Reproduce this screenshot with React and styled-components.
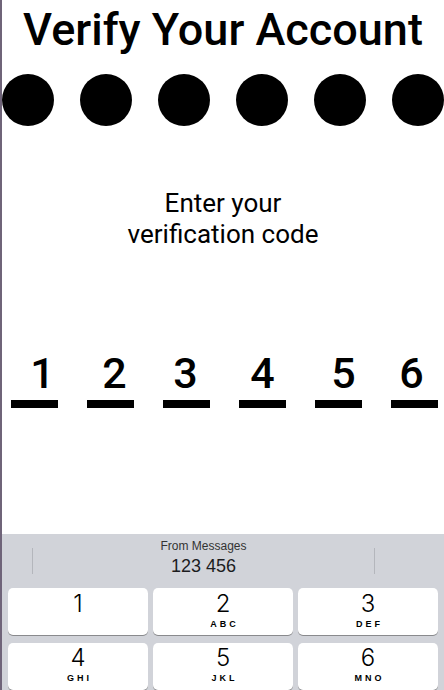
import React from "react";
import styled, { createGlobalStyle } from "styled-components";

const Global = createGlobalStyle`
  html, body { margin: 0; padding: 0; background: #ffffff; }
  body { font-family: Roboto, "Liberation Sans", sans-serif; }
  * { box-sizing: border-box; }
`;

const Screen = styled.div`
  width: 444px;
  height: 690px;
  border-left: 2px solid #6f6479;
  background: #ffffff;
  display: flex;
  flex-direction: column;
  overflow: hidden;
`;

const Title = styled.h1`
  margin: 2px 0 0;
  font-family: Roboto, "Liberation Sans", sans-serif;
  font-weight: 500;
  font-size: 45px;
  line-height: 56px;
  text-align: center;
  color: #000;
  white-space: nowrap;
`;

const DotRow = styled.div`
  margin-top: 16px;
  display: flex;
  justify-content: space-between;
  gap: 26px;
`;

const Dot = styled.span`
  width: 52px;
  height: 52px;
  border-radius: 50%;
  background: #000;
  flex: none;
`;

const Prompt = styled.p`
  margin: 62px 0 0;
  font-family: Roboto, "Liberation Sans", sans-serif;
  font-size: 26px;
  line-height: 31px;
  text-align: center;
  color: #000;
`;

const CodeRow = styled.div`
  margin-top: 99px;
  padding-left: 9px;
  display: flex;
  gap: 29px;
`;

const CodeCell = styled.div`
  width: 47px;
  font-family: Roboto, "Liberation Sans", sans-serif;
  font-weight: 500;
  font-size: 43px;
  line-height: 48px;
  text-align: center;
  color: #000;
  padding-bottom: 3px;
  border-bottom: 8px solid #000;
`;

const CodeDigit = styled.span`
  display: inline-block;
  transform: translateX(${(p) => p.$shift || 0}px);
`;

const Keyboard = styled.div`
  margin-top: auto;
  height: 156px;
  background: #d1d3d9;
  display: flex;
  flex-direction: column;
`;

const SuggestionBar = styled.div`
  height: 54px;
  display: grid;
  grid-template-columns: 31px 1fr 70px;
  align-items: start;
`;

const SuggestionSlot = styled.div`
  align-self: center;
  height: 26px;
  margin-top: -1px;
  border-right: ${(p) => (p.$divider ? "1px solid #b4b6bc" : "none")};
  border-left: ${(p) => (p.$leftDivider ? "1px solid #b4b6bc" : "none")};
`;

const Suggestion = styled.div`
  padding-top: 6px;
  display: flex;
  flex-direction: column;
  align-items: center;
  font-family: "Liberation Sans", Arial, sans-serif;
  color: #1c1c1e;
`;

const SuggestionLabel = styled.span`
  font-size: 12px;
  line-height: 12px;
  color: #333;
`;

const SuggestionCode = styled.span`
  font-size: 18px;
  line-height: 22px;
  margin-top: 3px;
`;

const Keys = styled.div`
  padding: 0 6px;
  display: grid;
  grid-template-columns: repeat(3, 1fr);
  column-gap: 5px;
  row-gap: 8px;
`;

const Key = styled.div`
  height: 47px;
  background: #ffffff;
  border-radius: 5px;
  box-shadow: 0 1px 0 #898a8d;
  display: flex;
  flex-direction: column;
  align-items: center;
  color: #000;
`;

const KeyDigit = styled.span`
  font-family: Inter, "Liberation Sans", sans-serif;
  font-weight: 300;
  font-size: 24px;
  line-height: 28px;
  margin-top: ${(p) => (p.$row2 ? "1px" : "2px")};
`;

const KeyLetters = styled.span`
  font-family: "Liberation Sans", Arial, sans-serif;
  font-size: 9px;
  font-weight: 700;
  letter-spacing: 3px;
  padding-left: 3px;
  line-height: 10px;
  margin-top: 1px;
`;

const code = [
  ["1", 8],
  ["2", 4],
  ["3", -1],
  ["4", 0],
  ["5", 5],
  ["6", -3],
];

const keys = [
  ["1", ""],
  ["2", "ABC"],
  ["3", "DEF"],
  ["4", "GHI"],
  ["5", "JKL"],
  ["6", "MNO"],
];

export default function App() {
  return (
    <>
      <Global />
      <Screen>
        <Title>Verify Your Account</Title>
        <DotRow>
          {[0, 1, 2, 3, 4, 5].map((i) => (
            <Dot key={i} />
          ))}
        </DotRow>
        <Prompt>
          Enter your
          <br />
          verification code
        </Prompt>
        <CodeRow>
          {code.map(([d, s]) => (
            <CodeCell key={d}>
              <CodeDigit $shift={s}>{d}</CodeDigit>
            </CodeCell>
          ))}
        </CodeRow>
        <Keyboard>
          <SuggestionBar>
            <SuggestionSlot $divider />
            <Suggestion>
              <SuggestionLabel>From Messages</SuggestionLabel>
              <SuggestionCode>123 456</SuggestionCode>
            </Suggestion>
            <SuggestionSlot $leftDivider />
          </SuggestionBar>
          <Keys>
            {keys.map(([d, l], i) => (
              <Key key={d}>
                <KeyDigit $row2={i >= 3}>{d}</KeyDigit>
                {l && <KeyLetters>{l}</KeyLetters>}
              </Key>
            ))}
          </Keys>
        </Keyboard>
      </Screen>
    </>
  );
}
